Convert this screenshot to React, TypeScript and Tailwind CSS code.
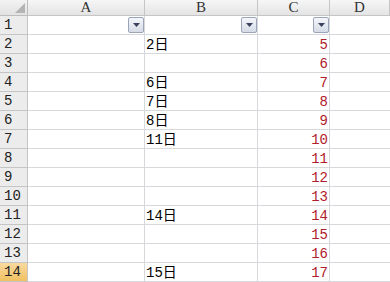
import React from 'react';

const rows: { b?: string; c?: string }[] = [
  {},
  { b: '2日', c: '5' },
  { c: '6' },
  { b: '6日', c: '7' },
  { b: '7日', c: '8' },
  { b: '8日', c: '9' },
  { b: '11日', c: '10' },
  { c: '11' },
  { c: '12' },
  { c: '13' },
  { b: '14日', c: '14' },
  { c: '15' },
  { c: '16' },
  { b: '15日', c: '17' },
];

const cols = 'grid grid-cols-[28px_117px_113px_72px_1fr]';

function FilterButton() {
  return (
    <div className="w-[16px] h-[16px] rounded-[2px] border border-[#9aa5b8] bg-gradient-to-b from-[#f4f6fa] to-[#d5dbe6] flex items-center justify-center">
      <svg width="7" height="4" viewBox="0 0 7 4">
        <path d="M0 0h7L3.5 4z" fill="#39425a" />
      </svg>
    </div>
  );
}

export default function App() {
  return (
    <div className="w-[390px] h-[282px] overflow-hidden bg-white text-[14px] leading-none text-black" style={{ fontFamily: '"Liberation Mono", "Noto Sans CJK SC", monospace' }}>
      {/* column headers */}
      <div className={`${cols} h-[16px]`}>
        <div className="relative border-r border-b border-[#bdbdbd] bg-gradient-to-b from-[#f3f3f3] to-[#e2e2e2]">
          <svg className="absolute right-[2px] bottom-[2px]" width="10" height="10" viewBox="0 0 10 10">
            <path d="M10 0v10H0z" fill="#b4b4b4" />
          </svg>
        </div>
        {['A', 'B', 'C', 'D'].map(l => (
          <div key={l} className="flex items-center justify-center border-r border-b border-[#c5c5c5] bg-gradient-to-b from-[#f6f6f6] to-[#e4e4e4] text-[#333]" style={{ fontFamily: '"Liberation Serif", serif', fontSize: 15 }}>
            {l}
          </div>
        ))}
      </div>
      {rows.map((r, i) => {
        const sel = i === 13;
        return (
          <div key={i} className={`${cols} h-[19px]`}>
            <div className={`flex items-center pl-[4px] border-r border-b border-[#c5c5c5] text-[#222] ${sel ? 'bg-gradient-to-b from-[#f9d99f] to-[#f1c15f]' : 'bg-[#ececec]'}`}>
              {i + 1}
            </div>
            <div className="flex items-center justify-end border-r border-b border-[#d6d8dc]">
              {i === 0 && <FilterButton />}
            </div>
            <div className="flex items-center justify-end border-r border-b border-[#d6d8dc]">
              {i === 0 ? <FilterButton /> : <span className="mr-auto pl-[1px] pt-[2px]">{r.b}</span>}
            </div>
            <div className="flex items-center justify-end border-r border-b border-[#d6d8dc] text-[#b0202a]">
              {i === 0 ? <FilterButton /> : <span className="pr-[1px] pt-[2px]">{r.c}</span>}
            </div>
            <div className="border-b border-[#d6d8dc]" />
          </div>
        );
      })}
    </div>
  );
}
